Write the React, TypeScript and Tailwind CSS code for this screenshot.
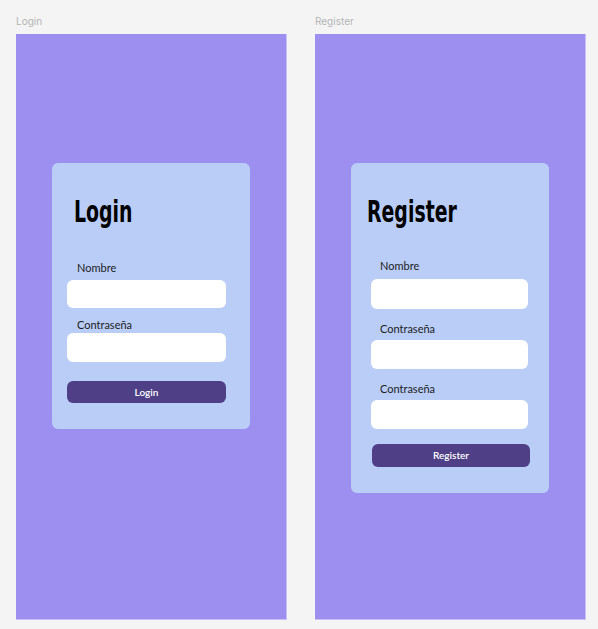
const TITLE = "inline-block origin-left scale-x-[0.63] font-['DejaVu_Sans',sans-serif] text-[30px] font-bold leading-[30px] text-black";

function Field({ label, labelClass, inputClass }: { label: string; labelClass: string; inputClass: string }) {
  return (
    <>
      <p className={`text-[11px] leading-[14px] text-[#1c1c1c] ${labelClass}`}>{label}</p>
      <div className={`rounded-[6px] bg-white ${inputClass}`} />
    </>
  );
}

function LoginCard() {
  return (
    <div className="mx-[36px] mt-[129px] rounded-[6px] bg-[#b9cdf7] px-[15px] pb-[26px] pt-[34px]">
      <h1 className="flex h-[30px] pl-[7px]">
        <span className={TITLE}>Login</span>
      </h1>
      <Field label="Nombre" labelClass="mt-[34px] pl-[10px]" inputClass="mt-[5px] h-[28px] w-[159px]" />
      <Field label="Contraseña" labelClass="mt-[10px] pl-[10px]" inputClass="mt-[1px] h-[29px] w-[159px]" />
      <button className="mt-[19px] flex h-[22px] w-[159px] items-center justify-center rounded-[6px] bg-[#4e3f87] text-[10px] font-semibold text-white">
        Login
      </button>
    </div>
  );
}

function RegisterCard() {
  return (
    <div className="mx-[36px] mt-[129px] rounded-[6px] bg-[#b9cdf7] pb-[26px] pl-[20px] pt-[34px]">
      <h1 className="-ml-[4px] flex h-[30px]">
        <span className={TITLE}>Register</span>
      </h1>
      <Field label="Nombre" labelClass="mt-[32px] pl-[9px]" inputClass="mt-[6px] h-[30px] w-[157px]" />
      <Field label="Contraseña" labelClass="mt-[13px] pl-[9px]" inputClass="mt-[4px] h-[29px] w-[157px]" />
      <Field label="Contraseña" labelClass="mt-[13px] pl-[9px]" inputClass="mt-[4px] h-[29px] w-[157px]" />
      <button className="ml-[1px] mt-[15px] flex h-[23px] w-[158px] items-center justify-center rounded-[6px] bg-[#4e3f87] text-[10px] font-semibold text-white">
        Register
      </button>
    </div>
  );
}

function Frame({ name, children }: { name: string; children: React.ReactNode }) {
  return (
    <div className="w-[271px]">
      <p className="h-[14px] font-['Inter',sans-serif] text-[10px] leading-[14px] text-[#b5b5b5]">{name}</p>
      <div className="mt-[6px] h-[586px] overflow-hidden border-b border-r border-[#c9c0f8] bg-[#9d8ff0]">{children}</div>
    </div>
  );
}

export default function App() {
  return (
    <div className="flex h-[629px] w-[598px] gap-[28px] bg-[#f4f4f4] pl-[16px] pt-[14px] font-['Lato',sans-serif]">
      <Frame name="Login">
        <LoginCard />
      </Frame>
      <Frame name="Register">
        <RegisterCard />
      </Frame>
    </div>
  );
}
